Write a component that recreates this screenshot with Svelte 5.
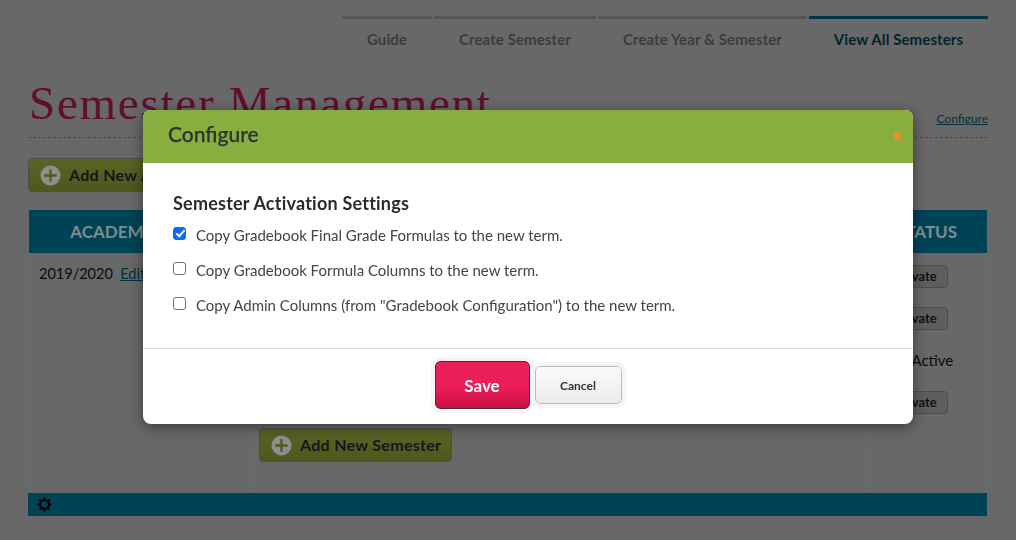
<script>
	const tabs = [
		{ label: 'Guide' },
		{ label: 'Create Semester' },
		{ label: 'Create Year & Semester' },
		{ label: 'View All Semesters', active: true }
	];

	const semesters = [
		{ name: 'Fall 2019', status: 'Activate' },
		{ name: 'Winter 2020', status: 'Activate' },
		{ name: 'Spring 2020', status: 'Now Active' },
		{ name: 'Summer 2020', status: 'Activate' }
	];

	let options = $state([
		{ label: 'Copy Gradebook Final Grade Formulas to the new term.', checked: true },
		{ label: 'Copy Gradebook Formula Columns to the new term.', checked: false },
		{ label: 'Copy Admin Columns (from "Gradebook Configuration") to the new term.', checked: false }
	]);
</script>

{#snippet plus()}
	<svg class="plus" viewBox="0 0 22 22" width="21" height="21">
		<circle cx="11" cy="11" r="10.5" fill="#8e8e8e" />
		<path d="M11 4.5v13M4.5 11h13" stroke="#4f5a1e" stroke-width="2.4" />
	</svg>
{/snippet}

<main class="page">
	<nav class="tabs">
		{#each tabs as tab}
			<div class="tab" class:active={tab.active}>{tab.label}</div>
		{/each}
	</nav>

	<header class="title-row">
		<h1>Semester Management</h1>
		<a href="#configure">Configure</a>
	</header>

	<button class="add add-year">{@render plus()}Add New Academic Year</button>

	<section class="table">
		<div class="head">
			<div>ACADEMIC YEAR</div>
			<div>SEMESTER</div>
			<div>STATUS</div>
		</div>
		<div class="body">
			<div class="year-cell">2019/2020 &nbsp;<a href="#edit">Edit</a></div>
			<div class="semester-cell">
				<div class="semester-list">
					{#each semesters as s}
						<div class="semester-row">{s.name}</div>
					{/each}
				</div>
				<button class="add">{@render plus()}Add New Semester</button>
			</div>
			<div class="status-cell">
				{#each semesters as s}
					<div class="status-row">
						{#if s.status === 'Activate'}
							<button class="activate">Activate</button>
						{:else}
							{s.status}
						{/if}
					</div>
				{/each}
			</div>
		</div>
		<div class="foot">
			<svg viewBox="0 0 16 16" width="15" height="15">
				<circle cx="8" cy="8" r="4.6" fill="none" stroke="#000" stroke-width="2.2" />
				<path d="M8 0.5v3M8 12.5v3M0.5 8h3M12.5 8h3M2.7 2.7l2.1 2.1M11.2 11.2l2.1 2.1M2.7 13.3l2.1-2.1M11.2 4.8l2.1-2.1" stroke="#000" stroke-width="2" />
			</svg>
		</div>
	</section>
</main>

<div class="modal">
	<div class="modal-head">
		<h2>Configure</h2>
		<span class="close">✖</span>
	</div>
	<div class="modal-body">
		<h3>Semester Activation Settings</h3>
		{#each options as opt}
			<label>
				<input type="checkbox" bind:checked={opt.checked} />
				{opt.label}
			</label>
		{/each}
	</div>
	<div class="modal-foot">
		<button class="save">Save</button>
		<button class="cancel">Cancel</button>
	</div>
</div>

<style>
	:global(body) {
		background: #686868;
		font-family: Lato, "Open Sans", sans-serif;
		overflow: hidden;
	}

	.page {
		height: 540px;
		box-sizing: border-box;
		padding: 16px 28px 0;
		display: flex;
		flex-direction: column;
		align-items: stretch;
	}

	.tabs {
		display: grid;
		grid-template-columns: 90px 162px 209px 179px;
		justify-content: end;
		gap: 2px;
	}

	.tab {
		border-top: 3px solid #555;
		padding-top: 10px;
		text-align: center;
		font-size: 15px;
		line-height: 20px;
		font-weight: 700;
		letter-spacing: 0.1px;
		color: #3c3c3c;
	}

	.tab.active {
		border-top-color: #003543;
		color: #04222e;
	}

	.title-row {
		display: flex;
		justify-content: space-between;
		align-items: flex-end;
		margin-top: 29px;
		height: 60px;
		box-sizing: border-box;
		border-bottom: 1px dashed #4a4a4a;
	}

	h1 {
		margin: 0;
		padding: 0 0 9px 1px;
		font-family: "Liberation Serif", serif;
		font-weight: 400;
		font-size: 47px;
		line-height: 50px;
		letter-spacing: 1.75px;
		color: #5e0f2c;
		white-space: nowrap;
	}

	.title-row a {
		font-size: 12px;
		line-height: 16px;
		margin-bottom: 10px;
		color: #00313c;
	}

	.add {
		display: inline-flex;
		align-items: center;
		gap: 8px;
		height: 34px;
		box-sizing: border-box;
		padding: 0 10px 0 11px;
		border: 1px solid #4d4d4d;
		border-radius: 4px;
		background: linear-gradient(#5a6424, #4e581d);
		font: 700 16px/1 Lato, sans-serif;
		letter-spacing: 0.3px;
		color: #15171c;
		white-space: nowrap;
	}

	.add-year {
		align-self: flex-start;
		margin-top: 20px;
	}

	.table {
		margin-top: 18px;
		display: flex;
		flex-direction: column;
		width: 959px;
	}

	.head {
		display: grid;
		grid-template-columns: 219px 618px 121px;
		height: 43px;
		margin-left: 1px;
		background: #004356;
		align-items: center;
		text-align: center;
		font-size: 17px;
		font-weight: 700;
		color: #7f8c91;
	}

	.body {
		display: grid;
		grid-template-columns: 220px 618px 121px;
		height: 240px;
	}

	.year-cell,
	.semester-cell,
	.status-cell {
		box-sizing: border-box;
		border-left: 1px solid #5f7075;
	}

	.status-cell {
		border-right: 1px solid #5f7075;
		padding: 12px 0 0 10px;
	}

	.year-cell {
		padding: 12px 10px;
		font-size: 14.5px;
		line-height: 18px;
		color: #0a0a0a;
	}

	.year-cell a {
		color: #00313c;
	}

	.semester-cell {
		padding: 12px 10px;
	}

	.semester-list {
		height: 163px;
	}

	.semester-row {
		height: 42px;
		font-size: 15px;
		color: #0a0a0a;
	}

	.status-row {
		display: flex;
		align-items: flex-start;
		height: 42px;
		font-size: 15px;
		line-height: 22px;
		color: #0a0a0a;
	}

	.activate {
		width: 71px;
		height: 23px;
		padding: 0;
		border: 1px solid #4d4d4d;
		border-radius: 4px;
		background: #5e5e5e;
		font: 700 13px/1 Lato, sans-serif;
		color: #111;
	}

	.foot {
		height: 23px;
		display: flex;
		align-items: center;
		padding-left: 9px;
		background: #004356;
	}

	.modal {
		position: fixed;
		left: 143px;
		top: 110px;
		width: 770px;
		height: 314px;
		display: flex;
		flex-direction: column;
		background: #fff;
		border-radius: 8px;
		box-shadow: 0 3px 14px rgba(0, 0, 0, 0.45);
		overflow: hidden;
	}

	.modal-head {
		height: 53px;
		flex: none;
		display: flex;
		align-items: center;
		justify-content: space-between;
		padding: 0 10px 0 25px;
		background: #87ae3f;
	}

	h2 {
		margin: 0 0 6px;
		font-family: "Lato Medium", Lato, sans-serif;
		font-size: 21px;
		font-weight: 500;
		-webkit-text-stroke: 0.25px #2f3330;
		color: #2f3330;
	}

	.close {
		font-size: 13px;
		line-height: 1;
		color: #f58a2b;
	}

	.modal-body {
		flex: 1;
		padding: 30px 30px 0;
		border-bottom: 1px solid #d9d9d9;
	}

	h3 {
		margin: 0 0 4px;
		font-size: 18px;
		line-height: 20px;
		font-weight: 700;
		letter-spacing: 0.22px;
		color: #2b2b2b;
	}

	label {
		display: flex;
		align-items: center;
		gap: 10px;
		height: 35px;
		font-size: 15px;
		color: #444;
	}

	input {
		appearance: none;
		position: relative;
		flex: none;
		width: 13px;
		height: 13px;
		margin: -3px 0 0;
		border: 1px solid #6e6e6e;
		border-radius: 3px;
		background: #fff;
	}

	input:checked {
		border-color: #0a6cf5;
		background: #0a6cf5;
	}

	input:checked::after {
		content: "";
		position: absolute;
		left: 3.5px;
		top: 0.5px;
		width: 3px;
		height: 7px;
		border: solid #fff;
		border-width: 0 2px 2px 0;
		transform: rotate(42deg);
	}

	.modal-foot {
		height: 75px;
		flex: none;
		display: flex;
		justify-content: center;
		align-items: center;
		gap: 5px;
		padding-bottom: 3px;
		box-sizing: border-box;
	}

	.save {
		width: 95px;
		height: 48px;
		border: 1px solid #4a3038;
		border-radius: 5px;
		outline: 4px solid #f5f5f5;
		background: linear-gradient(#ec1e59 55%, #c90f45);
		font: 700 17px/1 Lato, sans-serif;
		color: #fff;
	}

	.cancel {
		width: 87px;
		height: 38px;
		padding-top: 3px;
		border: 1px solid #bdbdbd;
		border-radius: 5px;
		outline: 4px solid #f5f5f5;
		background: linear-gradient(#fafafa, #ececec);
		font: 700 12px/1 Lato, sans-serif;
		color: #333;
	}
</style>
